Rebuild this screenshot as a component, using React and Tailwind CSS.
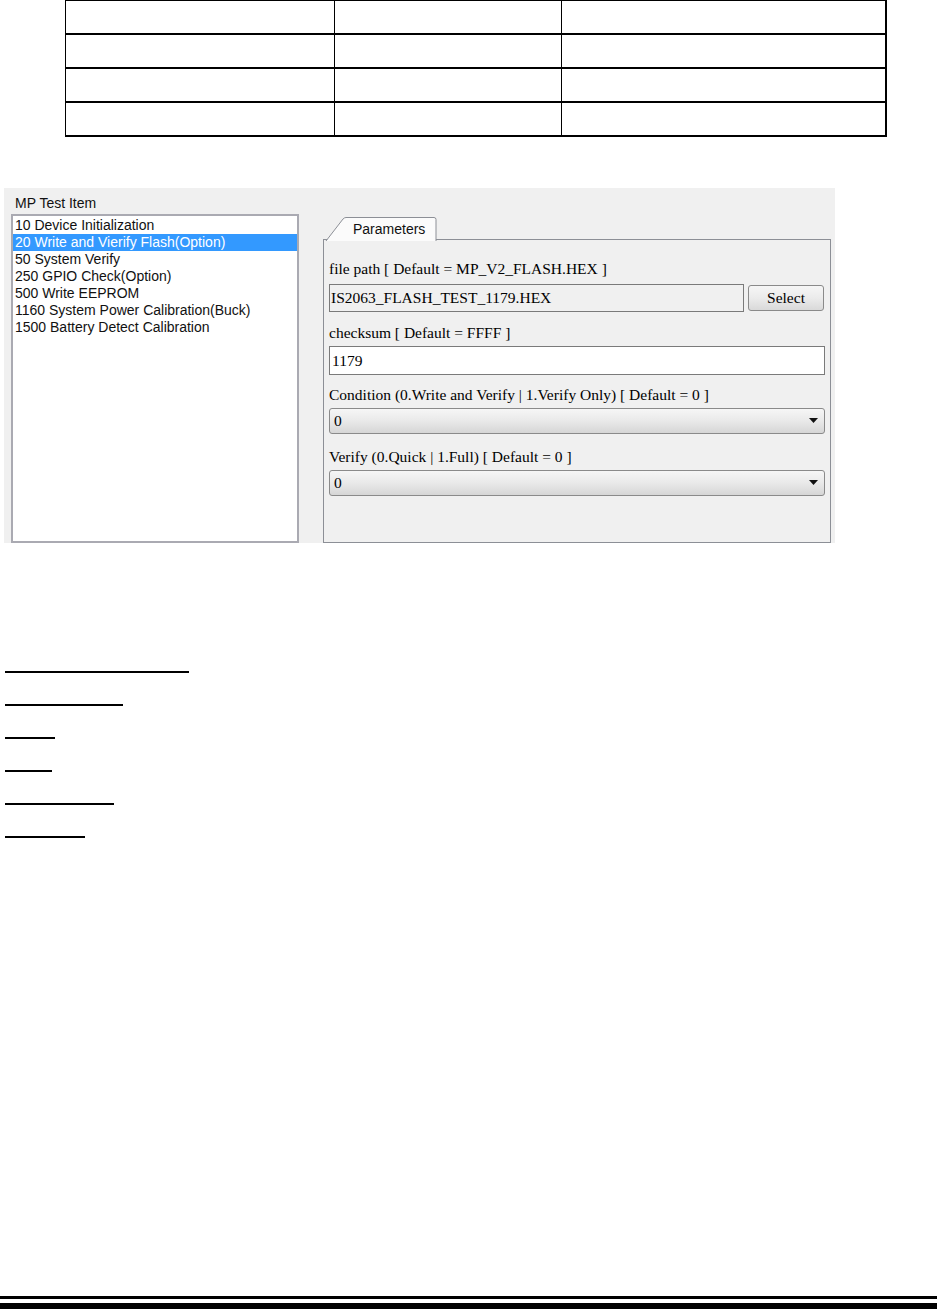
import React from 'react'

const TEST_ITEMS = [
  '10 Device Initialization',
  '20 Write and Vierify Flash(Option)',
  '50 System Verify',
  '250 GPIO Check(Option)',
  '500 Write EEPROM',
  '1160 System Power Calibration(Buck)',
  '1500 Battery Detect Calibration',
]

const UNDERLINES = [
  { w: 'w-[184px]', h: 'h-[2px]' },
  { w: 'w-[118px]', h: 'h-[2px]' },
  { w: 'w-[50px]', h: 'h-[2px]' },
  { w: 'w-[47px]', h: 'h-[2px]' },
  { w: 'w-[109px]', h: 'h-[1.5px]' },
  { w: 'w-[80px]', h: 'h-[1.5px]' },
]

const serif = { fontFamily: '"Liberation Serif", "Times New Roman", serif' }
const sans = { fontFamily: '"Liberation Sans", Arial, sans-serif' }

function EmptyTable() {
  return (
    <div className="ml-[65px] w-[822px] border-t border-l-[1.5px] border-r-2 border-black">
      {[0, 1, 2, 3].map((row) => (
        <div key={row} className="flex h-[34px] border-b-2 border-black">
          <div className="w-[269px] border-r border-black" />
          <div className="w-[227px] border-r border-black" />
          <div className="flex-1" />
        </div>
      ))}
    </div>
  )
}

function Combo({ value }) {
  return (
    <div className="mt-[5px] flex h-[26px] w-[496px] items-center justify-between rounded-[3px] border border-[#8a8a8a] bg-gradient-to-b from-[#f6f6f6] via-[#e9e9e9] to-[#d6d6d6] pl-[4px] pr-[6px]">
      <span>{value}</span>
      <svg width="9" height="5" viewBox="0 0 9 5">
        <path d="M0 0 L9 0 L4.5 5 Z" fill="#111" />
      </svg>
    </div>
  )
}

function ParametersTab() {
  return (
    <div className="ml-[24px] mt-[29px] flex flex-col">
      <div className="relative h-[24px] w-[114px]">
        <svg className="absolute inset-0" width="114" height="24" viewBox="0 0 114 24">
          <path d="M3 24 L20 2 Q21.5 0.5 23 0.5 L111 0.5 Q113 0.5 113 2.5 L113 24" fill="#fbfbfb" stroke="#8c8f96" strokeWidth="1" />
        </svg>
        <span className="relative block pl-[30px] pt-[4px] text-[14px] leading-[16px] text-[#111]" style={sans}>
          Parameters
        </span>
      </div>
      <div className="-mt-px h-[320px] w-[508px] border border-[#8c8f96] pl-[5px] pt-[21px] text-[15.5px] text-black" style={serif}>
        <div className="h-[16px] leading-[16px]">file path [ Default = MP_V2_FLASH.HEX ]</div>
        <div className="mt-[7px] flex gap-[4px]">
          <div className="flex h-[28px] w-[415px] items-center border border-[#7a7a7a] bg-[#f0f0f0] pl-[1px]">IS2063_FLASH_TEST_1179.HEX</div>
          <div className="mt-[1px] flex h-[26px] w-[76px] items-center justify-center rounded-[3px] border border-[#8a8a8a] bg-gradient-to-b from-[#f6f6f6] via-[#ebebeb] to-[#d9d9d9]">Select</div>
        </div>
        <div className="mt-[13px] h-[16px] leading-[16px]">checksum [ Default = FFFF ]</div>
        <div className="mt-[5px] flex h-[29px] w-[496px] items-center border border-[#7a7a7a] bg-white pl-[2px]">1179</div>
        <div className="mt-[12px] h-[16px] leading-[16px]">Condition (0.Write and Verify | 1.Verify Only) [ Default = 0 ]</div>
        <Combo value="0" />
        <div className="mt-[15px] h-[16px] leading-[16px]">Verify (0.Quick | 1.Full) [ Default = 0 ]</div>
        <Combo value="0" />
      </div>
    </div>
  )
}

function TestItemScreen() {
  return (
    <div className="ml-[4px] mt-[51px] flex h-[355px] w-[831px] overflow-hidden bg-[#f0f0f0]">
      <div className="flex flex-col pl-[7px]">
        <div className="pl-[4px] pt-[7px] text-[14px] leading-[16px] text-[#111]" style={sans}>
          MP Test Item
        </div>
        <div className="mt-[3px] h-[340px] w-[288px] border-2 border-[#aaaab2] bg-white pt-[1px] text-[14px] text-[#111]" style={sans}>
          {TEST_ITEMS.map((item, i) => (
            <div
              key={item}
              className={`h-[17px] pl-[2px] leading-[17px] ${i === 1 ? 'bg-[#3399ff] text-white' : ''}`}
            >
              {item}
            </div>
          ))}
        </div>
      </div>
      <ParametersTab />
    </div>
  )
}

export default function App() {
  return (
    <div className="flex h-[1309px] w-[937px] flex-col bg-white">
      <EmptyTable />
      <TestItemScreen />
      <div className="ml-[5px] mt-[128px] flex flex-col">
        {UNDERLINES.map((line, i) => (
          <div key={i} className="flex h-[33px] items-start">
            <div className={`${line.w} ${line.h} bg-black`} />
          </div>
        ))}
      </div>
      <div className="mt-auto flex flex-col">
        <div className="h-[3px] bg-black" />
        <div className="mt-[4px] h-[6px] bg-black" />
      </div>
    </div>
  )
}
